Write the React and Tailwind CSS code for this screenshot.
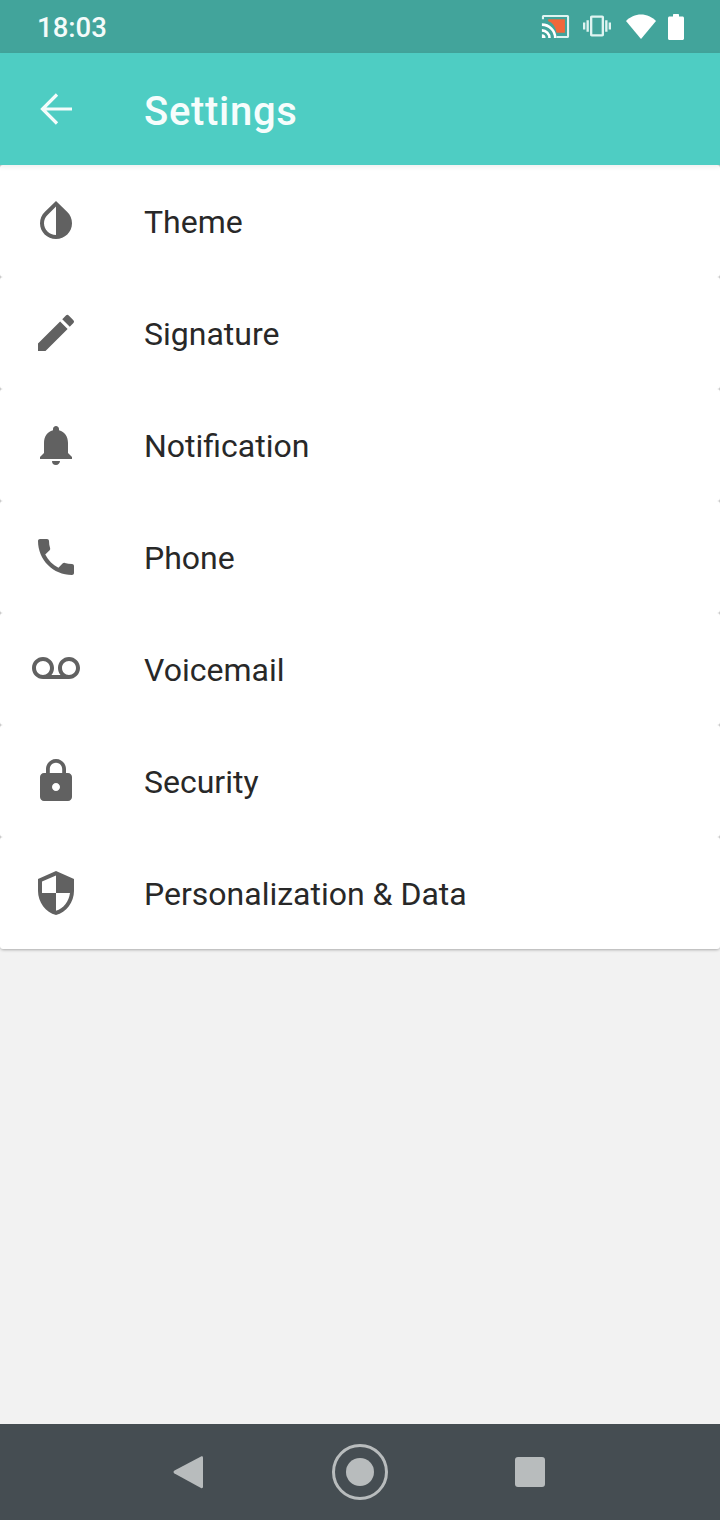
import React from 'react';
import { MdInvertColors, MdEdit, MdNotifications, MdPhone, MdVoicemail, MdLock, MdSecurity, MdVibration } from 'react-icons/md';

// Settings list entries
const rows = [
  { label: 'Theme', Icon: MdInvertColors },
  { label: 'Signature', Icon: MdEdit },
  { label: 'Notification', Icon: MdNotifications },
  { label: 'Phone', Icon: MdPhone },
  { label: 'Voicemail', Icon: MdVoicemail },
  { label: 'Security', Icon: MdLock },
  { label: 'Personalization & Data', Icon: MdSecurity },
];

const CastIcon = () => (
  <svg width="29" height="23" viewBox="2 2 26 22">
    <path d="M8 6h16v13h-8c-1-6-4-10-8-11z" fill="#f2673a" />
    <path d="M2 6V3.500C2 2.700 2.700 2 3.500 2h23c.8 0 1.500.7 1.500 1.500v19c0 .8-.7 1.500-1.500 1.500H16v-2h10V4H4v2z" fill="#dff4f1" />
    <path d="M2 20.500a3.500 3.500 0 0 1 3.500 3.500H2zM2 15.500a8.500 8.500 0 0 1 8.500 8.500H8a6 6 0 0 0-6-6zM2 10a14 14 0 0 1 14 14h-2.500A11.500 11.500 0 0 0 2 12.500z" fill="#ffffff" />
  </svg>
);

const WifiIcon = () => (
  <svg width="30" height="25" viewBox="0 0 30 25">
    <path d="M15 25 0 7C4 3 9.200.5 15 .5S26 3 30 7z" fill="#ffffff" />
  </svg>
);

const BatteryIcon = () => (
  <svg width="16" height="26" viewBox="0 0 16 26">
    <path d="M5 2.500V1c0-.6.4-1 1-1h4c.6 0 1 .4 1 1v1.500h3.500c.8 0 1.500.7 1.500 1.500v20.500c0 .8-.7 1.500-1.500 1.500h-13C.7 26 0 25.300 0 24.500V4c0-.8.7-1.500 1.500-1.500z" fill="#ffffff" />
  </svg>
);

const BackArrow = () => (
  <svg width="48" height="48" viewBox="0 0 48 48" fill="none" stroke="#f4fcfb" strokeWidth="3.200">
    <path d="M40 24H10M25 9.500 10.500 24 25 38.500" />
  </svg>
);

const App = () => (
  <div className="flex h-[1520px] w-[720px] flex-col overflow-hidden bg-[#f2f2f2] font-['Roboto',sans-serif]">
    {/* Status bar */}
    <div className="flex h-[53px] shrink-0 items-center justify-between bg-[#42a49b] pl-[37px] pr-[36px]">
      <span className="pt-[3px] text-[27.500px] font-medium leading-none text-[#f4fbfa]">18:03</span>
      <div className="flex items-center">
        <CastIcon />
        <span className="ml-[13px] mb-[2px]">
          <MdVibration size={28} color="#dff4f1" />
        </span>
        <span className="ml-[15px] mb-[1px]">
          <WifiIcon />
        </span>
        <span className="ml-[12px]">
          <BatteryIcon />
        </span>
      </div>
    </div>

    {/* App bar */}
    <header className="z-10 flex h-[112px] shrink-0 items-center bg-[#4ecdc3] pl-[32px] shadow-[0_2px_5px_rgba(0,0,0,0.07)]">
      <BackArrow />
      <h1 className="ml-[64px] pt-[5px] text-[40px] font-medium leading-none tracking-[0.7px] text-[#f6fdfc]">Settings</h1>
    </header>

    {/* Settings list */}
    <main className="flex-1">
      <ul className="rounded-b-[4px] bg-[#c8c8c8] shadow-[0_1px_3px_rgba(0,0,0,0.3)]">
        {rows.map(({ label, Icon }) => (
          <li key={label} className="flex h-[112px] items-center rounded-[3px] bg-white pl-[32px]">
            <Icon size={48} color="#616161" />
            <span className="ml-[64px] pt-[2px] text-[32px] leading-none text-[#282828]">{label}</span>
          </li>
        ))}
      </ul>
    </main>

    {/* Navigation bar */}
    <nav className="flex h-[96px] shrink-0 items-center bg-[#454d52] pl-[173px]">
      <svg width="30" height="34" viewBox="0 0 30 34">
        <path d="M28 1.500 1.500 15.500c-1.300.8-1.300 2.200 0 3L28 33c1 .5 2 0 2-1V2.500c0-1-1-1.500-2-1z" fill="#b8bcbd" />
      </svg>
      <svg className="ml-[128px]" width="58" height="58" viewBox="0 0 58 58">
        <circle cx="29" cy="29" r="26.500" fill="none" stroke="#b8bcbd" strokeWidth="3" />
        <circle cx="29" cy="29" r="14" fill="#b8bcbd" />
      </svg>
      <div className="ml-[126px] h-[30px] w-[30px] rounded-[3px] bg-[#b8bcbd]" />
    </nav>
  </div>
);

export default App;
